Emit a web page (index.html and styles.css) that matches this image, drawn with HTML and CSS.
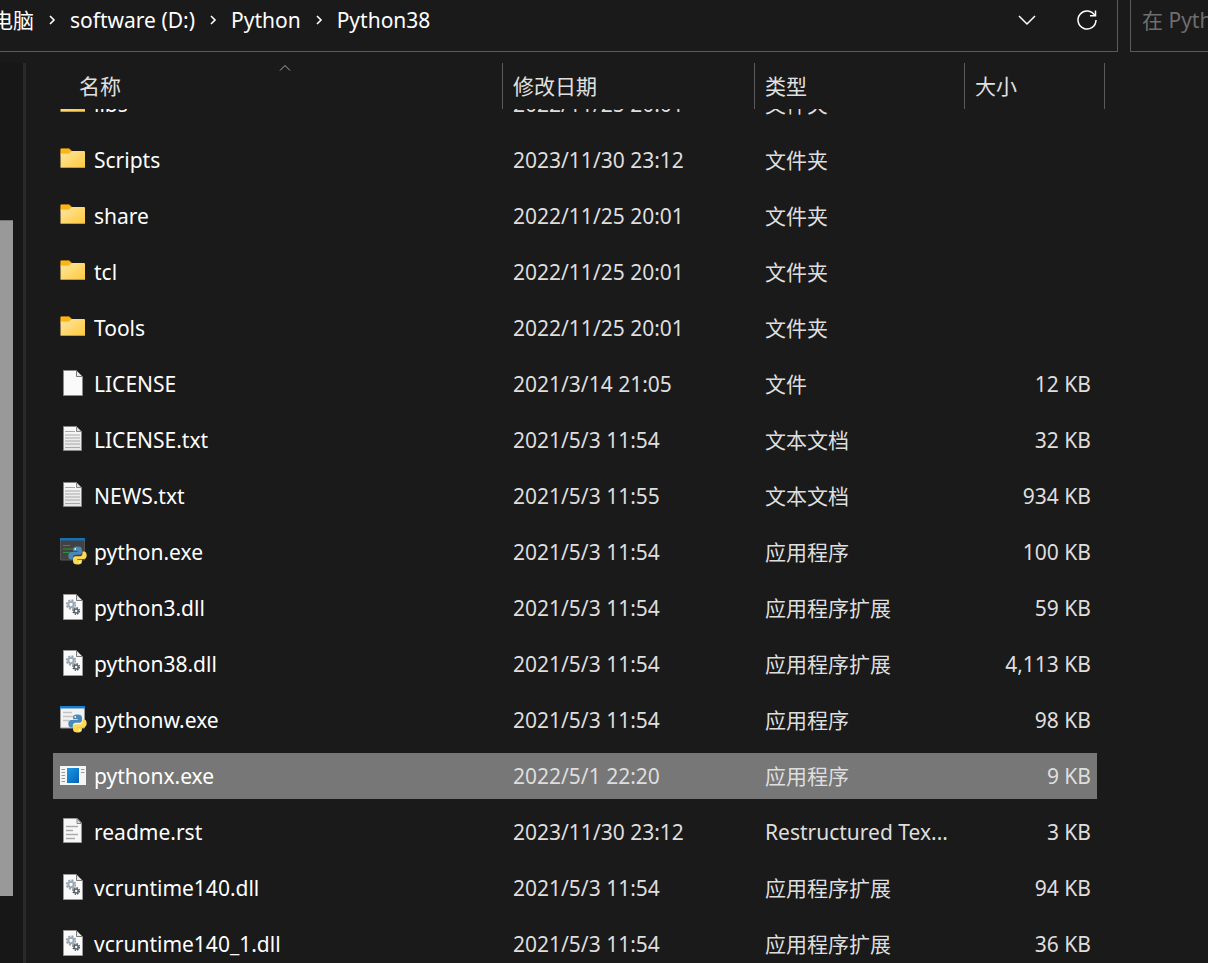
FILE: index.html
```html
<!DOCTYPE html>
<html lang="zh-CN">
<head>
<meta charset="utf-8">
<title>Python38</title>
<link rel="stylesheet" href="styles.css">
</head>
<body>
<svg class="defs" aria-hidden="true">
  <defs>
    <linearGradient id="g-folder" x1="0" y1="0" x2="1" y2="1"><stop offset="0" stop-color="#ffe7a1"/><stop offset="1" stop-color="#fdc83c"/></linearGradient>
    <linearGradient id="g-blue" x1="0" y1="0" x2="1" y2="1"><stop offset="0" stop-color="#1a9be6"/><stop offset="1" stop-color="#0560b8"/></linearGradient>
    <linearGradient id="g-page" x1="0" y1="0" x2="0" y2="1"><stop offset="0" stop-color="#fafafa"/><stop offset="1" stop-color="#e4e4e4"/></linearGradient>
    <symbol id="folder" viewBox="0 0 28 28">
      <path d="M0.5 8V3.5Q0.500 2.500 1.500 2.500H9L11.500 4.800V8z" fill="#f9b616" stroke="#b87c10" stroke-width=".6"/>
      <path d="M.5 7.500H9L11.500 5H24Q25 5 25 6V21Q25 22 24 22H1.500Q.5 22 .5 21z" fill="url(#g-folder)"/>
      <path d="M.8 21.500H24.700" stroke="#d69a22" fill="none"/>
    </symbol>
    <symbol id="file" viewBox="0 0 28 28">
      <path d="M3.500.5H16.500L22.500 6.500V25.500H3.500z" fill="#fafafa" stroke="#8a8a8a"/>
      <path d="M16.500.5V6.500H22.500z" fill="#e8e8e8" stroke="#777"/>
    </symbol>
    <symbol id="text" viewBox="0 0 28 28">
      <path d="M3.500.5H16.500L21.500 5.500V24.500H3.500z" fill="url(#g-page)" stroke="#888"/>
      <path d="M16.500.5V5.500H21.500z" fill="#ddd" stroke="#888"/>
      <path d="M5 5.500H15M5 9H20M5 12H20M5 15H20M5 18H20M5 21.500H20" stroke="#a8a8a8"/>
    </symbol>
    <symbol id="rst" viewBox="0 0 28 28">
      <path d="M3.500.5H17L21.500 5V24.500H3.500z" fill="#f7f7f7" stroke="#999"/>
      <path d="M17 .5V5.500H21.500z" fill="#ddd" stroke="#888"/>
      <path d="M6 8.500H18M6 12.500H13M6 16.500H18M6 20.500H15" stroke="#aaa" stroke-width="1.500"/>
    </symbol>
    <symbol id="dll" viewBox="0 0 28 28">
      <path d="M3.500.5H16.500L22.500 6.500V25.500H3.500z" fill="#fafafa" stroke="#999"/>
      <path d="M16.500.5V6.500H22.500z" fill="#e8e8e8" stroke="#777"/>
      <circle cx="11" cy="10.500" r="4.300" fill="none" stroke="#94a0aa" stroke-width="1.800" stroke-dasharray="1.900 1.480"/>
      <circle cx="11" cy="10.500" r="2.700" fill="none" stroke="#9ca8b2" stroke-width="2"/>
      <circle cx="16.200" cy="17" r="3.200" fill="none" stroke="#4d565c" stroke-width="1.500" stroke-dasharray="1.400 1.110"/>
      <circle cx="16.200" cy="17" r="2" fill="none" stroke="#566067" stroke-width="1.600"/>
    </symbol>
    <symbol id="snakes" viewBox="0 0 18 18">
      <path d="M9 .5C5.500.5 4.800 1.800 4.800 3.300V5H9.200V5.700H3C1.200 5.700.3 7 .3 9.200S1.300 12.700 3 12.700H4.600V10.700C4.600 9.100 5.900 8.300 7.200 8.300H11C12.400 8.300 13.200 7.300 13.200 6V3.300C13.200 1.500 11.800.5 9 .5z" fill="#4a88ba"/>
      <path d="M9 17.500C12.500 17.500 13.200 16.200 13.200 14.700V13H8.800V12.300H15C16.800 12.300 17.700 11 17.700 8.800S16.700 5.300 15 5.300H13.700V7.300C13.700 8.900 12.400 9.700 11.100 9.700H7C5.600 9.700 4.800 10.700 4.800 12V14.700C4.800 16.500 6.200 17.500 9 17.500z" fill="#ffd94e"/>
      <circle cx="6.900" cy="2.800" r=".8" fill="#fff"/><circle cx="11.100" cy="15.200" r=".8" fill="#fff"/>
    </symbol>
    <symbol id="python" viewBox="0 0 28 28">
      <path d="M.5.5H24.500V22H.5z" fill="#424242" stroke="#555"/>
      <path d="M0 0H25V2.500H0z" fill="#1671b5"/>
      <path d="M3 7.500H10M3 11H14M3 14.500H9" stroke="#2d923d" stroke-width="1.200"/>
      <use href="#snakes" x="8" y="8" width="19" height="19"/>
    </symbol>
    <symbol id="pythonw" viewBox="0 0 28 28">
      <path d="M.5.5H24.500V22H.5z" fill="#f2f2f2" stroke="#999"/>
      <path d="M0 0H25V2.500H0z" fill="#1b7fd0"/>
      <path d="M3 6.500H12M3 10.500H14M3 14.500H9" stroke="#c4c4c4" stroke-width="1.300"/>
      <use href="#snakes" x="8" y="8" width="19" height="19"/>
    </symbol>
    <symbol id="app" viewBox="0 0 28 28">
      <path d="M0 4H26V23H0z" fill="#f5f5f5"/>
      <path d="M7 6H19V21H7z" fill="url(#g-blue)"/>
      <path d="M1.500 7.500H5M1.500 10.500H5M1.500 13.500H5M1.500 16.500H5M1.500 19.500H5M21 7.500H24.500M21 10.500H24.500" stroke="#999"/>
    </symbol>
    <symbol id="sep" viewBox="0 0 8 12"><path d="M2 2L6 6L2 10" fill="none" stroke="#fff" stroke-width="1.600"/></symbol>
  </defs>
</svg>

<header class="toolbar">
  <div class="address">
    <nav class="crumbs" aria-label="路径">
      <a href="#">此电脑</a>
      <svg class="sep"><use href="#sep"/></svg>
      <a href="#">software (D:)</a>
      <svg class="sep"><use href="#sep"/></svg>
      <a href="#">Python</a>
      <svg class="sep"><use href="#sep"/></svg>
      <a href="#">Python38</a>
    </nav>
    <button class="tool" aria-label="历史记录"><svg viewBox="0 0 24 24"><path d="M4 8L12 16L20 8"/></svg></button>
    <button class="tool" aria-label="刷新"><svg viewBox="0 0 24 24"><path d="M19.800 7.500A9 9 0 1 0 21 12M20.500 2.500V7.800H15"/></svg></button>
  </div>
  <input class="search" type="text" aria-label="搜索" placeholder="在 Python38 中搜索">
</header>

<div class="body">
  <aside class="tree"><div class="thumb"></div></aside>
  <main class="files">
    <div class="columns">
      <button class="name">名称<svg class="sort" viewBox="0 0 12 8"><path d="M1 6.500L6 1.500L11 6.500"/></svg></button>
      <button>修改日期</button>
      <button>类型</button>
      <button>大小</button>
    </div>
    <div class="view">
      <table class="list" aria-label="文件">
        <colgroup><col class="c-name"><col class="c-date"><col class="c-type"><col class="c-size"></colgroup>
        <tbody>
          <tr><td><div class="entry"><svg><use href="#folder"/></svg>libs</div></td><td>2022/11/25 20:01</td><td>文件夹</td><td></td></tr>
          <tr><td><div class="entry"><svg><use href="#folder"/></svg>Scripts</div></td><td>2023/11/30 23:12</td><td>文件夹</td><td></td></tr>
          <tr><td><div class="entry"><svg><use href="#folder"/></svg>share</div></td><td>2022/11/25 20:01</td><td>文件夹</td><td></td></tr>
          <tr><td><div class="entry"><svg><use href="#folder"/></svg>tcl</div></td><td>2022/11/25 20:01</td><td>文件夹</td><td></td></tr>
          <tr><td><div class="entry"><svg><use href="#folder"/></svg>Tools</div></td><td>2022/11/25 20:01</td><td>文件夹</td><td></td></tr>
          <tr><td><div class="entry"><svg><use href="#file"/></svg>LICENSE</div></td><td>2021/3/14 21:05</td><td>文件</td><td>12 KB</td></tr>
          <tr><td><div class="entry"><svg><use href="#text"/></svg>LICENSE.txt</div></td><td>2021/5/3 11:54</td><td>文本文档</td><td>32 KB</td></tr>
          <tr><td><div class="entry"><svg><use href="#text"/></svg>NEWS.txt</div></td><td>2021/5/3 11:55</td><td>文本文档</td><td>934 KB</td></tr>
          <tr><td><div class="entry"><svg><use href="#python"/></svg>python.exe</div></td><td>2021/5/3 11:54</td><td>应用程序</td><td>100 KB</td></tr>
          <tr><td><div class="entry"><svg><use href="#dll"/></svg>python3.dll</div></td><td>2021/5/3 11:54</td><td>应用程序扩展</td><td>59 KB</td></tr>
          <tr><td><div class="entry"><svg><use href="#dll"/></svg>python38.dll</div></td><td>2021/5/3 11:54</td><td>应用程序扩展</td><td>4,113 KB</td></tr>
          <tr><td><div class="entry"><svg><use href="#pythonw"/></svg>pythonw.exe</div></td><td>2021/5/3 11:54</td><td>应用程序</td><td>98 KB</td></tr>
          <tr class="selected"><td><div class="entry"><svg><use href="#app"/></svg>pythonx.exe</div></td><td>2022/5/1 22:20</td><td>应用程序</td><td>9 KB</td></tr>
          <tr><td><div class="entry"><svg><use href="#rst"/></svg>readme.rst</div></td><td>2023/11/30 23:12</td><td>Restructured Tex...</td><td>3 KB</td></tr>
          <tr><td><div class="entry"><svg><use href="#dll"/></svg>vcruntime140.dll</div></td><td>2021/5/3 11:54</td><td>应用程序扩展</td><td>94 KB</td></tr>
          <tr><td><div class="entry"><svg><use href="#dll"/></svg>vcruntime140_1.dll</div></td><td>2021/5/3 11:54</td><td>应用程序扩展</td><td>36 KB</td></tr>
        </tbody>
      </table>
    </div>
  </main>
</div>
</body>
</html>
```
FILE: styles.css
```css
* { box-sizing: border-box; }
body {
  margin: 0;
  height: 100vh;
  display: flex;
  flex-direction: column;
  overflow: hidden;
  background: #1a1a1a;
  color: #fff;
  font: 21px/28px "Noto Sans", "Noto Sans CJK SC", sans-serif;
}
button, input { font: inherit; color: inherit; background: none; border: 0; padding: 0; margin: 0; }
.defs { position: absolute; width: 0; height: 0; }

.toolbar { display: flex; gap: 12px; height: 52px; flex: none; }
.address {
  flex: 1;
  min-width: 0;
  display: flex;
  align-items: center;
  gap: 36px;
  padding: 0 18px 11px 0;
  border: solid #5a5a5a;
  border-width: 0 1px 1px 0;
}
.crumbs { flex: 1; display: flex; align-items: center; gap: 14px; margin-left: -29px; white-space: nowrap; }
.crumbs a { color: inherit; text-decoration: none; }
.sep { width: 8px; height: 12px; flex: none; }
.tool { width: 24px; height: 24px; display: flex; }
.tool svg { width: 24px; height: 24px; fill: none; stroke: #fff; stroke-width: 1.5; }
.search {
  width: 78px;
  padding: 0 0 11px 11px;
  border: solid #5a5a5a;
  border-width: 0 0 1px 1px;
}
.search::placeholder { color: #6e6e6e; opacity: 1; }

.body { flex: 1; min-height: 0; display: flex; padding-top: 11px; }
.tree { width: 26px; flex: none; padding-top: 157px; background: #171717; border-right: 3px solid #292929; }
.thumb { width: 13px; height: 676px; background: #999; border-top: 1px solid #777; }
.files { flex: 1; min-width: 0; display: flex; flex-direction: column; padding-left: 27px; }
.columns { display: grid; grid-template-columns: 450px 252px 210px 140px; height: 46px; flex: none; }
.columns button { position: relative; padding-left: 10px; text-align: left; color: #e0e0e0; border-right: 1px solid #5a5a5a; }
.columns .name { padding-left: 26px; }
.sort { position: absolute; top: 1px; left: 226px; width: 12px; height: 8px; fill: none; stroke: #aaa; }

.view { flex: 1; min-height: 0; overflow: hidden; }
.list { margin-top: -38px; width: 1044px; table-layout: fixed; border-collapse: separate; border-spacing: 0 10px; }
.c-name { width: 450px; }
.c-date { width: 252px; }
.c-type { width: 210px; }
.list td { height: 46px; padding: 0 0 0 10px; white-space: nowrap; color: #dedede; }
.list td:first-child { padding-left: 7px; color: #fff; }
.list td:last-child { padding: 0 6px 0 0; text-align: right; }
.entry { display: flex; align-items: center; gap: 6px; }
.entry svg { width: 28px; height: 28px; flex: none; }
.selected td { background: #777; }
```
